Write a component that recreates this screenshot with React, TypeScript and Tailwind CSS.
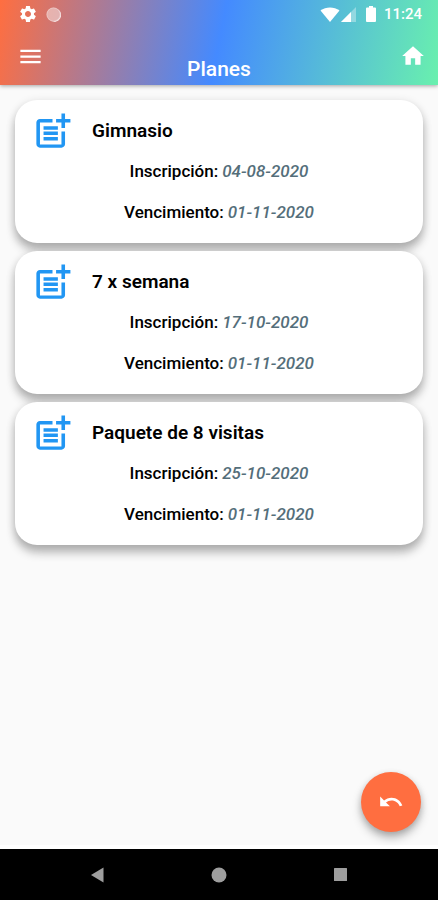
import React from 'react';
import { MdHome, MdMenu, MdPostAdd, MdSettings, MdUndo } from 'react-icons/md';

interface Plan {
  name: string;
  start: string;
  end: string;
}

const plans: Plan[] = [
  { name: 'Gimnasio', start: '04-08-2020', end: '01-11-2020' },
  { name: '7 x semana', start: '17-10-2020', end: '01-11-2020' },
  { name: 'Paquete de 8 visitas', start: '25-10-2020', end: '01-11-2020' },
];

const StatusBar: React.FC = () => (
  <div className="flex h-7 items-center justify-between pr-4 pl-[18px]">
    <div className="flex items-center gap-2">
      <MdSettings size={20} />
      <svg width="15" height="15" viewBox="0 0 15 15" aria-hidden="true">
        <circle cx="7.5" cy="7.5" r="7" fill="#fff" fillOpacity="0.45" />
        <circle cx="7.5" cy="7.5" r="6.6" fill="none" stroke="#fff" strokeOpacity="0.3" strokeWidth="0.8" />
        <path d="M12 2.2A7 7 0 0 1 4.5 13.8 6.8 6.8 0 0 0 12 2.2z" fill="#fff" fillOpacity="0.8" />
        <path d="M12.3 2.4A7 7 0 0 1 5 14.1 7 7 0 0 0 12.3 2.4z" fill="#fff" />
      </svg>
    </div>
    <div className="flex items-center">
      <svg width="20" height="15" viewBox="0 0 20 15" fill="#fff" aria-hidden="true">
        <path d="M0.5 3.6C6 -0.7 14 -0.7 19.5 3.6L10 15z" />
      </svg>
      <svg className="ml-px" width="15" height="15" viewBox="0 0 15 15" fill="#fff" aria-hidden="true">
        <path d="M15 0v15H0z" fillOpacity="0.35" />
        <path d="M10 5v10H0z" />
      </svg>
      <svg className="ml-2.5" width="10" height="16" viewBox="0 0 10 16" fill="#fff" aria-hidden="true">
        <path d="M3 0h4v1.6h2q1 0 1 1V15q0 1-1 1H1q-1 0-1-1V2.6q0-1 1-1h2z" />
      </svg>
      <span className="ml-2 text-[15px] font-medium">11:24</span>
    </div>
  </div>
);

const Header: React.FC = () => (
  <header className="relative z-10 bg-[linear-gradient(101deg,#ff6e40,#448aff,#69f0ae)] text-white shadow-[0_1px_4px_rgba(0,0,0,0.35)]">
    <StatusBar />
    <div className="flex h-[57px] justify-between px-3">
      <button type="button" aria-label="Menú" className="flex h-14 w-9 items-center justify-center">
        <MdMenu size={27} />
      </button>
      <h1 className="self-end pb-1 text-[21px] leading-6 font-medium">Planes</h1>
      <button type="button" aria-label="Inicio" className="flex h-14 w-9 items-center justify-end">
        <MdHome size={26} />
      </button>
    </div>
  </header>
);

const PlanCard: React.FC<{ plan: Plan }> = ({ plan }) => (
  <li className="rounded-[22px] bg-white pb-[10px] shadow-[0_8px_10px_rgba(0,0,0,0.24),0_2px_10px_rgba(0,0,0,0.14)]">
    <div className="flex h-[51px] items-center gap-[18px] pt-3 pl-4">
      <MdPostAdd size={43} className="shrink-0 text-[#2196f3]" />
      <h2 className="text-[19px] font-semibold">{plan.name}</h2>
    </div>
    <dl className="text-[17px] font-medium">
      <div className="flex h-[41px] items-center justify-center gap-1">
        <dt>Inscripción:</dt>
        <dd className="text-[#546e7a] italic">{plan.start}</dd>
      </div>
      <div className="flex h-[41px] items-center justify-center gap-1">
        <dt>Vencimiento:</dt>
        <dd className="text-[#546e7a] italic">{plan.end}</dd>
      </div>
    </dl>
  </li>
);

const NavBar: React.FC = () => (
  <nav className="flex h-[51px] items-center justify-around bg-black px-9 text-[#9e9e9e]">
    <button type="button" aria-label="Atrás">
      <svg width="14" height="16" viewBox="0 0 14 16" fill="currentColor">
        <path d="M13.5 0.5v15L1 8z" />
      </svg>
    </button>
    <button type="button" aria-label="Pantalla principal">
      <svg width="16" height="16" viewBox="0 0 16 16" fill="currentColor">
        <circle cx="8" cy="8" r="7.5" />
      </svg>
    </button>
    <button type="button" aria-label="Recientes">
      <svg width="14" height="14" viewBox="0 0 14 14" fill="currentColor">
        <rect width="13" height="13" rx="0.5" />
      </svg>
    </button>
  </nav>
);

const App: React.FC = () => (
  <div className="flex min-h-screen flex-col bg-[#fafafa] font-[Roboto,sans-serif] text-black">
    <Header />
    <main className="relative flex-1 border-b-4 border-white px-[15px] pt-[15px] pb-24">
      <ul className="flex flex-col gap-2">
        {plans.map((plan) => (
          <PlanCard key={plan.name} plan={plan} />
        ))}
      </ul>
      <button
        type="button"
        aria-label="Volver"
        className="absolute right-[17px] bottom-[13px] flex size-[60px] items-center justify-center rounded-full bg-[#ff6e40] text-white shadow-[0_6px_10px_rgba(0,0,0,0.25),0_2px_6px_rgba(0,0,0,0.15)]"
      >
        <MdUndo size={26} />
      </button>
    </main>
    <NavBar />
  </div>
);

export default App;
